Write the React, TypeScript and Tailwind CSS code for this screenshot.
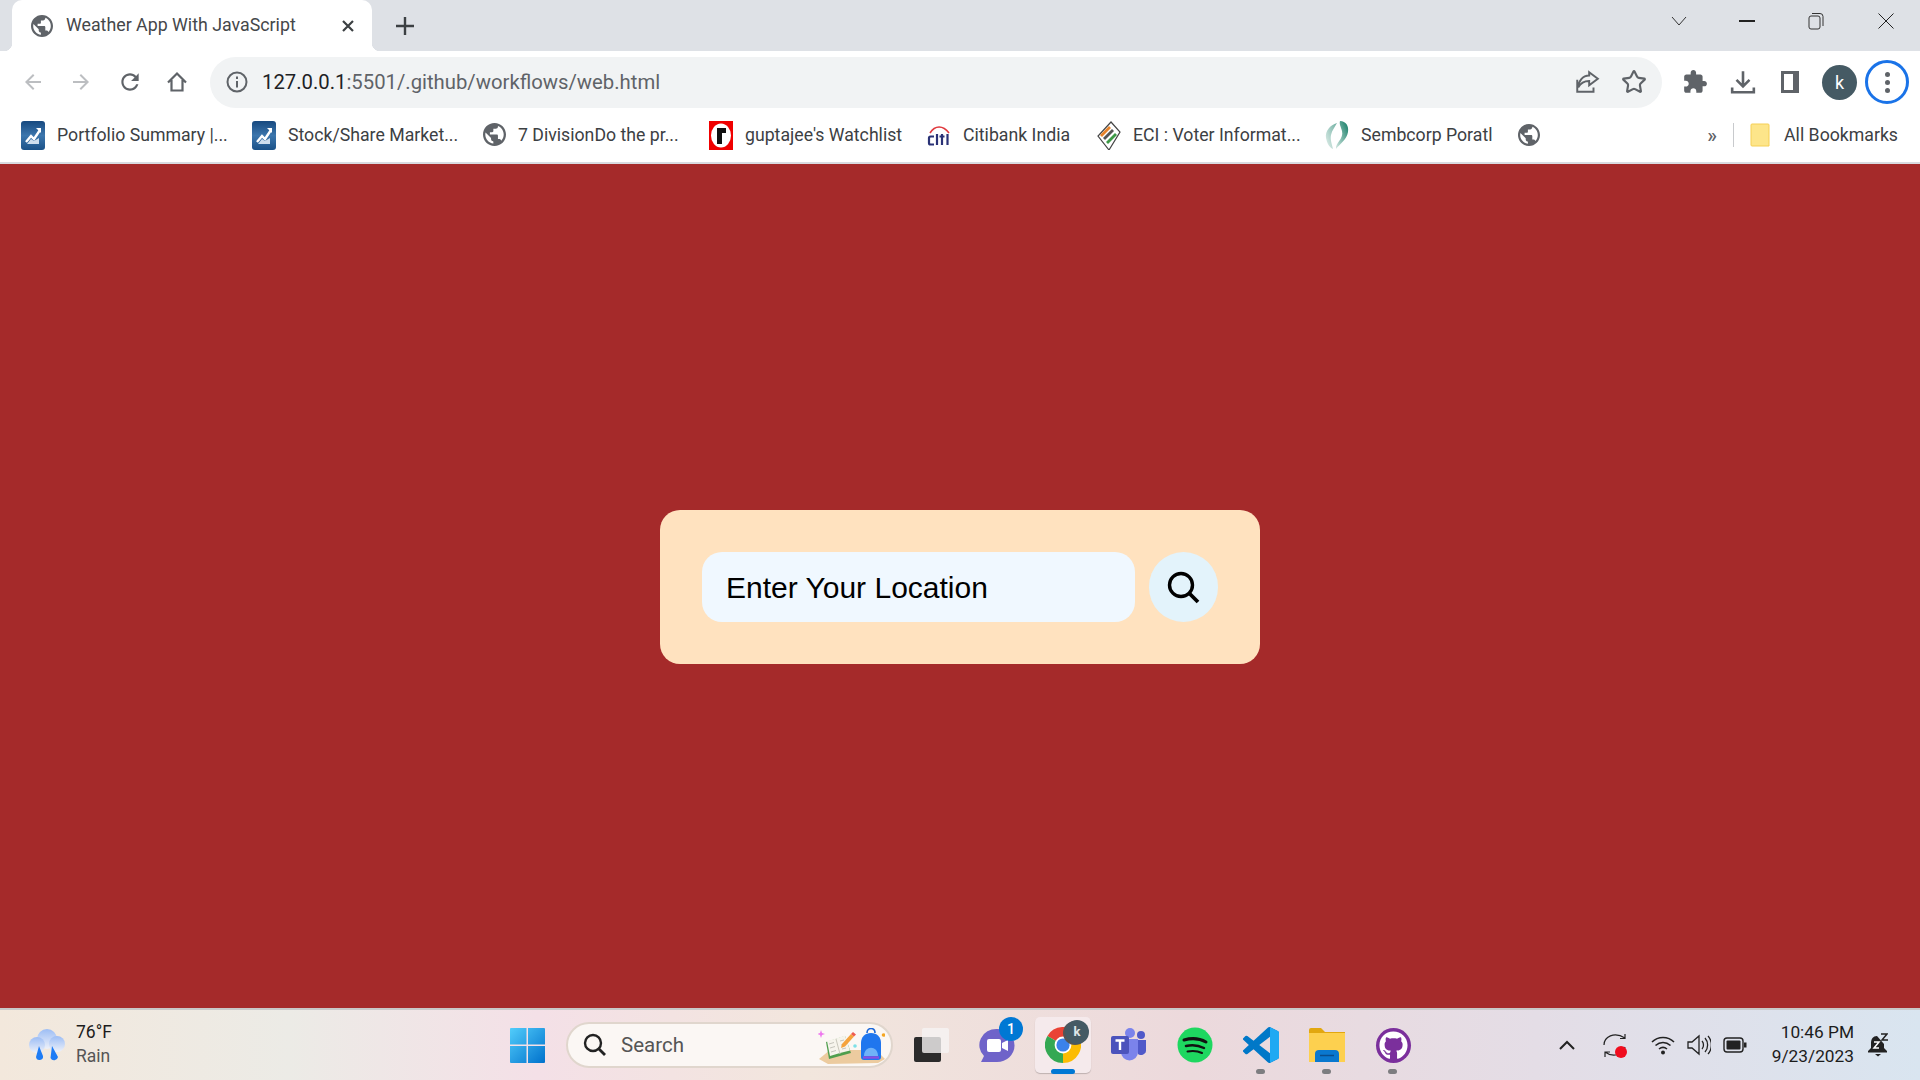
import React from 'react';
import { Star } from 'lucide-react';
import { FaGithub } from 'react-icons/fa';

const uiFont = "font-['Roboto','Noto_Sans',sans-serif]";

// Globe used for tab and bookmarks without a favicon
const Globe = ({ className = '' }: { className?: string }) => (
  <svg className={className} viewBox="2 2 20 20">
    <circle cx="12" cy="12" r="9" fill="#fff" />
    <path fill="#5f6368" d="M12 2C6.48 2 2 6.48 2 12s4.48 10 10 10 10-4.48 10-10S17.52 2 12 2zm-1 17.93c-3.95-.49-7-3.85-7-7.930 0-.62.08-1.210.21-1.790L9 15v1c0 1.100.9 2 2 2v1.930zm6.900-2.540c-.26-.81-1-1.390-1.900-1.390h-1v-3c0-.55-.45-1-1-1H8v-2h2c.55 0 1-.45 1-1V7h2c1.100 0 2-.9 2-2v-.41c2.930 1.190 5 4.060 5 7.410 0 2.080-.8 3.970-2.100 5.390z" />
  </svg>
);

const ChartFavicon = () => (
  <svg className="w-6 h-[29px] shrink-0" viewBox="0 0 24 29">
    <defs>
      <linearGradient id="cf" x1="0" y1="0" x2="0" y2="1">
        <stop offset="0" stopColor="#17497f" />
        <stop offset="0.5" stopColor="#3c76ad" />
        <stop offset="1" stopColor="#1b5288" />
      </linearGradient>
    </defs>
    <rect width="24" height="29" rx="3" fill="url(#cf)" />
    <path d="M5 21l5-6 3 3 6-9" stroke="#fff" strokeWidth="2.4" fill="none" />
    <path d="M6 23h12v-6l-5 3-3-2z" fill="#cfdfee" />
    <path d="M15 7h5v5z" fill="#fff" />
  </svg>
);

const RedFavicon = () => (
  <svg className="w-6 h-[29px] shrink-0" viewBox="0 0 24 29">
    <rect width="24" height="29" fill="#f00000" />
    <ellipse cx="12" cy="14.5" rx="10" ry="12" fill="#fff" />
    <path d="M8 7h9v5h-4v11H8z" fill="#111" />
  </svg>
);

const CitiFavicon = () => (
  <svg className="w-6 h-[29px] shrink-0" viewBox="0 0 24 29">
    <path d="M3 12C8 4 16 4 22 12" stroke="#e0393e" strokeWidth="1.6" fill="none" />
    <path d="M7 15.5H3.5c-1 0-1.5.6-1.5 1.5v5c0 1 .5 1.5 1.5 1.5H7M10 13v11M15 13v11M12.5 15.5h5M20.5 13v11" stroke="#2a3276" strokeWidth="2.2" fill="none" />
  </svg>
);

const EciFavicon = () => (
  <svg className="w-6 h-[29px] shrink-0" viewBox="0 0 24 29">
    <path d="M12 29L1 15 14 1l9 10z" fill="#fff" stroke="#444" strokeWidth="1.2" />
    <path d="M3 14l9-9 2 2-9 9z" fill="#e8832a" />
    <path d="M6 17l9-9 2 2-9 9z" fill="#555" />
    <path d="M9 21l9-9 2 2-9 9z" fill="#3d9a46" />
  </svg>
);

const SembFavicon = () => (
  <svg className="w-6 h-[29px] shrink-0" viewBox="0 0 24 29">
    <defs>
      <linearGradient id="sb" x1="1" y1="0" x2="0" y2="1">
        <stop offset="0" stopColor="#0f7a63" />
        <stop offset="1" stopColor="#d6e9e3" />
      </linearGradient>
    </defs>
    <path d="M15 0c6 0 9 5 8 11-1 7-8 12-12 17-1-6 8-10 6-18-1-4-3-7-2-10z" fill="url(#sb)" />
    <path d="M12 2C5 4 0 10 1 17c1 5 3 9 7 11-1-5-3-9-2-14 1-5 4-8 6-12z" fill="url(#sb)" opacity="0.6" />
  </svg>
);

const bookmarks = [
  { label: 'Portfolio Summary |...', icon: <ChartFavicon />, box: 'w-[170px]', gap: 'ml-[25px]' },
  { label: 'Stock/Share Market...', icon: <ChartFavicon />, box: 'w-[170px]', gap: 'ml-[25px]' },
  { label: '7 DivisionDo the pr...', icon: <Globe className="w-[23px] h-[23px] shrink-0" />, box: 'w-[167px]', gap: 'ml-[24px]' },
  { label: "guptajee's Watchlist", icon: <RedFavicon />, box: 'w-[157px]', gap: 'ml-[24px]' },
  { label: 'Citibank India', icon: <CitiFavicon />, box: 'w-[110px]', gap: 'ml-[25px]' },
  { label: 'ECI : Voter Informat...', icon: <EciFavicon />, box: 'w-[167px]', gap: 'ml-[24px]' },
  { label: 'Sembcorp Poratl', icon: <SembFavicon />, box: 'w-[132px]', gap: 'ml-[25px]' },
];

function TabStrip() {
  return (
    <div className="flex h-[51px] items-start bg-[#dee1e6] pl-3">
      <div className="relative flex h-[51px] w-[360px] items-center rounded-t-[10px] bg-white pl-[19px]">
        <div className="absolute -left-2 bottom-0 h-2 w-2 bg-[radial-gradient(circle_at_0_0,#dee1e6_8px,#fff_8.5px)]" />
        <div className="absolute -right-2 bottom-0 h-2 w-2 bg-[radial-gradient(circle_at_100%_0,#dee1e6_8px,#fff_8.5px)]" />
        <Globe className="h-[22px] w-[22px]" />
        <span className={`ml-[13px] w-[274px] text-[17.8px] text-[#45474a] ${uiFont}`}>Weather App With JavaScript</span>
        <svg className="ml-[1px] h-[14px] w-[14px]" viewBox="0 0 14 14">
          <path d="M2 2l10 10M12 2L2 12" stroke="#3c4043" strokeWidth="2.2" />
        </svg>
      </div>
      <svg className="ml-[24px] mt-[17px] h-[18px] w-[18px]" viewBox="0 0 18 18">
        <path d="M9 0v18M0 9h18" stroke="#3c4043" strokeWidth="2.4" />
      </svg>
      {/* window controls */}
      <div className="ml-auto mt-[12px] flex items-center">
        <svg className="h-[14px] w-[16px]" viewBox="0 0 16 14">
          <path d="M1 3l7 8 7-8" stroke="#333" strokeWidth="1" fill="none" />
        </svg>
        <div className="ml-[52px] h-[1.5px] w-4 bg-[#222]" />
        <svg className="ml-[53px] h-[18px] w-[16px]" viewBox="0 0 16 18">
          <rect x="1" y="4" width="11" height="13" rx="2" stroke="#333" fill="none" />
          <path d="M4 1.5h8a3 3 0 0 1 3 3V14" stroke="#333" fill="none" />
        </svg>
        <svg className="ml-[54px] mr-[26px] h-4 w-4" viewBox="0 0 16 16">
          <path d="M0.5 0.5l15 15M15.5 0.5l-15 15" stroke="#222" />
        </svg>
      </div>
    </div>
  );
}

function Toolbar() {
  return (
    <div className="flex h-[62px] items-center bg-white">
      <svg className="ml-[21px] h-6 w-6 fill-[#bcbec1]" viewBox="0 0 24 24">
        <path d="M20 11H7.83l5.59-5.59L12 4l-8 8 8 8 1.41-1.41L7.83 13H20v-2z" />
      </svg>
      <svg className="ml-6 h-6 w-6 fill-[#bcbec1]" viewBox="0 0 24 24">
        <path d="M12 4l-1.41 1.41L16.17 11H4v2h12.17l-5.58 5.59L12 20l8-8z" />
      </svg>
      <svg className="ml-6 h-[26px] w-[26px] fill-[#5f6368]" viewBox="0 0 24 24">
        <path d="M17.65 6.35C16.2 4.9 14.21 4 12 4c-4.42 0-7.99 3.58-7.99 8s3.57 8 7.99 8c3.73 0 6.84-2.55 7.73-6h-2.08c-.82 2.33-3.04 4-5.65 4-3.31 0-6-2.69-6-6s2.69-6 6-6c1.66 0 3.14.69 4.22 1.78L13 11h7V4l-2.35 2.35z" />
      </svg>
      <svg className="ml-[22px] h-6 w-6" viewBox="0 0 24 24">
        <path d="M3 12.5L12 3.5l9 9M6.5 10v10.5h11V10" stroke="#5f6368" strokeWidth="2.2" fill="none" />
      </svg>

      {/* address bar */}
      <div className="ml-[21px] flex h-[51px] w-[1452px] items-center rounded-full bg-[#f1f3f4]">
        <svg className="ml-[16px] h-[22px] w-[22px]" viewBox="0 0 22 22">
          <circle cx="11" cy="11" r="9.5" stroke="#5f6368" strokeWidth="2" fill="none" />
          <path d="M11 10v6.5M11 5.5v2.5" stroke="#5f6368" strokeWidth="2" />
        </svg>
        <span className={`ml-[14px] text-[20.3px] text-[#5f6368] ${uiFont}`}>
          <span className="text-[#202124]">127.0.0.1</span>:5501/.github/workflows/web.html
        </span>
        <svg className="ml-auto h-[26px] w-[26px]" viewBox="0 0 24 24">
          <path d="M3 10v11h15v-4M14 3l8 6-8 6v-4c-5 0-8 2-10 6 0-6 4-11 10-11z" stroke="#5f6368" strokeWidth="1.8" fill="none" />
        </svg>
        <Star className="ml-[21px] mr-[15px] h-[26px] w-[26px] text-[#5f6368]" strokeWidth={2} />
      </div>

      <svg className="ml-[20px] h-[26px] w-[26px] fill-[#5f6368]" viewBox="0 0 24 24">
        <path d="M20.5 11H19V7c0-1.1-.9-2-2-2h-4V3.5C13 2.12 11.88 1 10.5 1S8 2.12 8 3.5V5H4c-1.1 0-1.99.9-1.99 2v3.8H3.5c1.49 0 2.7 1.21 2.7 2.7s-1.21 2.7-2.7 2.7H2V20c0 1.1.9 2 2 2h3.8v-1.5c0-1.49 1.21-2.7 2.7-2.7 1.49 0 2.7 1.21 2.7 2.7V22H17c1.1 0 2-.9 2-2v-4h1.5c1.38 0 2.5-1.12 2.5-2.5S21.88 11 20.5 11z" />
      </svg>
      <svg className="ml-[22px] h-[26px] w-[26px]" viewBox="0 0 24 24">
        <path d="M12 2v13M6 10l6 6 6-6M2 17v4.5h20V17" stroke="#5f6368" strokeWidth="2.4" fill="none" />
      </svg>
      <svg className="ml-[23px] h-[26px] w-[22px]" viewBox="0 0 22 26">
        <path d="M2 2h18v22H2zM5 5v16h9V5z" fill="#5f6368" fillRule="evenodd" />
      </svg>
      <div className="ml-[21px] flex h-[35px] w-[35px] items-center justify-center rounded-full bg-[#455a64] text-[18px] text-white">
        <span className={uiFont}>k</span>
      </div>
      <div className="ml-[8px] flex h-[44px] w-[44px] flex-col items-center justify-center gap-[3px] rounded-full border-[3px] border-[#1a73e8]">
        <div className="h-[5px] w-[5px] rounded-full bg-[#5f6368]" />
        <div className="h-[5px] w-[5px] rounded-full bg-[#5f6368]" />
        <div className="h-[5px] w-[5px] rounded-full bg-[#5f6368]" />
      </div>
    </div>
  );
}

function BookmarksBar() {
  return (
    <div className={`flex h-[51px] items-center border-b-2 border-[#d8dadf] bg-white pb-[5px] pl-[21px] text-[17.7px] text-[#3c4043] ${uiFont}`}>
      {bookmarks.map((b, i) => (
        <div key={b.label} className={`flex items-center ${i > 0 ? b.gap : ''}`}>
          <div className="flex w-6 justify-center">{b.icon}</div>
          <span className={`ml-3 whitespace-nowrap ${b.box}`}>{b.label}</span>
        </div>
      ))}
      <Globe className="ml-[25px] h-[22px] w-[22px]" />
      <span className="ml-auto text-[20px] font-medium text-[#5f6368]">»</span>
      <div className="ml-[16px] h-[24px] w-px bg-[#c8cacd]" />
      <svg className="ml-[16px] h-[24px] w-[20px]" viewBox="0 0 20 24">
        <path d="M1 2a1 1 0 0 1 1-1h16a1 1 0 0 1 1 1v21H2a1 1 0 0 1-1-1z" fill="#fde58a" stroke="#f5cf55" />
      </svg>
      <span className="ml-[14px] mr-[22px]">All Bookmarks</span>
    </div>
  );
}

function SearchCard() {
  return (
    <main className="flex flex-1 items-center justify-center bg-[#a52a2a] pt-[2px]">
      <div className="flex h-[154px] w-[600px] items-center gap-[14px] rounded-[20px] bg-[#ffe2bf] p-[42px]">
        <div className="flex h-[70px] w-[433px] items-center rounded-[20px] bg-[#f0f8ff] pl-[24px] font-['Liberation_Sans',Arial,sans-serif] text-[30px] text-black">
          Enter Your Location
        </div>
        <button className="flex h-[70px] w-[69px] items-center justify-center rounded-full bg-[#e3f3fb]">
          <svg className="h-[33px] w-[33px]" viewBox="0 0 33 33">
            <circle cx="14" cy="14" r="11.5" stroke="#000" strokeWidth="3.4" fill="none" />
            <path d="M22.5 22.5L31 31" stroke="#000" strokeWidth="3.8" />
          </svg>
        </button>
      </div>
    </main>
  );
}

const WeatherIcon = () => (
  <svg className="h-[34px] w-[36px]" viewBox="0 0 36 34">
    <defs>
      <linearGradient id="cl" x1="0" y1="0" x2="0" y2="1">
        <stop offset="0" stopColor="#9cbdf5" />
        <stop offset="1" stopColor="#eef1f9" />
      </linearGradient>
    </defs>
    <circle cx="18" cy="11" r="10" fill="url(#cl)" />
    <circle cx="8" cy="17" r="8" fill="url(#cl)" />
    <circle cx="28" cy="16" r="8" fill="url(#cl)" />
    <path d="M10 18l4 10a3.5 3.5 0 0 1-7 1z" fill="#1e7cf5" />
    <path d="M23 18l6 11a4 4 0 0 1-7.5 1z" fill="#1e7cf5" />
  </svg>
);

const WindowsLogo = () => (
  <svg className="h-[35px] w-[35px] shrink-0" viewBox="0 0 35 35">
    <defs>
      <linearGradient id="wn" x1="0" y1="0" x2="1" y2="1">
        <stop offset="0" stopColor="#52cdfb" />
        <stop offset="1" stopColor="#0071cc" />
      </linearGradient>
    </defs>
    <path d="M1 0h15.5v16.5H0V1a1 1 0 0 1 1-1zM18 0h16a1 1 0 0 1 1 1v15.5H18zM0 18h16.5v17H1a1 1 0 0 1-1-1zM18 18h17v16a1 1 0 0 1-1 1H18z" fill="url(#wn)" />
  </svg>
);

// book, pencil and backpack sitting in the search pill
const SearchArt = () => (
  <svg className="h-[36px] w-[67px]" viewBox="0 0 67 36">
    <path d="M12 22h46l9 9-7 4-50 1-9-5z" fill="#eccb9f" />
    <path d="M8 14l19-6 6 17-22 6z" fill="#4f9e4d" />
    <path d="M9 13l9-2.500 9-3 5 15-10 2.500-10 3z" fill="#f6f4ec" />
    <path d="M18 11l4 15" stroke="#c9c7bb" strokeWidth="1" />
    <path d="M11 16l5-1.500M12 20l5-1.500M13 24l5-1.500M22 13l4-1M23 17l4-1M24 21l4-1" stroke="#b9b8ae" strokeWidth="0.800" />
    <path d="M24 16l9-10 3 2.500-9 10-4 1.500z" fill="#f5a33c" />
    <path d="M33 6l2-2 3 2.500-2 2z" fill="#ef5b50" />
    <path d="M49 5c0-6 8-6 8 0" stroke="#1a66d8" strokeWidth="1.600" fill="none" />
    <path d="M43 29V15c0-6 4-10 10-10s10 4 10 10v14a3 3 0 0 1-3 3H46a3 3 0 0 1-3-3z" fill="#1f76ee" />
    <path d="M46 28c0-11 14-11 14 0z" fill="#6fb2f8" />
    <path d="M45 29.500h16" stroke="#8a4fe0" strokeWidth="2.400" />
    <path d="M3 2l1 3 3 1-3 1-1 3-1-3-3-1 3-1z" fill="#ee77ee" />
    <circle cx="65.500" cy="7" r="1.800" fill="#f5a623" />
    <circle cx="37" cy="18" r="1.800" fill="#7de0e8" />
  </svg>
);

const ChromeIcon = () => (
  <svg className="h-[36px] w-[36px]" viewBox="0 0 36 36">
    <path d="M18 18L2.4 9A18 18 0 0 1 33.6 9Z" fill="#ea4335" />
    <path d="M18 18L33.6 9A18 18 0 0 1 18 36Z" fill="#fbbc04" />
    <path d="M18 18L18 36A18 18 0 0 1 2.4 9Z" fill="#34a853" />
    <circle cx="18" cy="18" r="8.4" fill="#fff" />
    <circle cx="18" cy="18" r="6.6" fill="#3b82ea" />
  </svg>
);

const TeamsIcon = () => (
  <svg className="h-[34px] w-[36px]" viewBox="0 0 36 34">
    <circle cx="19" cy="5" r="5" fill="#7b83eb" />
    <circle cx="30" cy="7" r="4" fill="#5059c9" />
    <path d="M24 12h11v11a5 5 0 0 1-8 3z" fill="#5059c9" />
    <path d="M10 11h17v13a8.500 8.500 0 0 1-17 0z" fill="#7b83eb" />
    <rect x="0" y="8" width="18" height="18" rx="2" fill="#4b53bc" />
    <path d="M4.500 12.500h9M9 12.500V22" stroke="#fff" strokeWidth="2.400" />
  </svg>
);

const SpotifyIcon = () => (
  <svg className="h-[36px] w-[36px]" viewBox="0 0 36 36">
    <circle cx="18" cy="18" r="17.500" fill="#1ed760" />
    <path d="M7 13c7-2 15-2 22 2" stroke="#111" strokeWidth="3" strokeLinecap="round" fill="none" />
    <path d="M9 19c6-1.500 12-1 18 2" stroke="#111" strokeWidth="2.500" strokeLinecap="round" fill="none" />
    <path d="M10.500 24.500c5-1 10-.7 14.500 1.500" stroke="#111" strokeWidth="2" strokeLinecap="round" fill="none" />
  </svg>
);

const VsCodeIcon = () => (
  <svg className="h-[36px] w-[36px]" viewBox="0 0 24 24">
    <path d="M23.15 2.587L18.21.21a1.494 1.494 0 0 0-1.705.29l-9.46 8.63-4.12-3.128a.999.999 0 0 0-1.276.057L.327 7.261A1 1 0 0 0 .326 8.74L3.899 12 .326 15.26a1 1 0 0 0 .001 1.479L1.65 17.94a.999.999 0 0 0 1.276.057l4.12-3.128 9.46 8.63a1.492 1.492 0 0 0 1.704.29l4.942-2.377A1.5 1.5 0 0 0 24 20.06V3.939a1.5 1.5 0 0 0-.85-1.352zm-5.146 14.861L10.826 12l7.178-5.448v10.896z" fill="#0078c8" />
    <path d="M18 .1l5.150 2.487A1.500 1.500 0 0 1 24 3.940v16.120a1.500 1.500 0 0 1-.850 1.352L18 23.900z" fill="#1fa9f3" />
  </svg>
);

const FolderIcon = () => (
  <svg className="h-[34px] w-[36px]" viewBox="0 0 36 34">
    <path d="M0 2a2 2 0 0 1 2-2h10l4 4h20v4H0z" fill="#e2a70f" />
    <path d="M0 5h36v29H0z" fill="#fdd04f" />
    <path d="M6 34V26a4 4 0 0 1 4-4h16a4 4 0 0 1 4 4v8z" fill="#0a78cf" />
    <path d="M11 27.500h14" stroke="#0a4d8c" strokeWidth="1.500" />
  </svg>
);

const ChatIcon = () => (
  <svg className="h-[36px] w-[36px]" viewBox="0 0 36 36">
    <path d="M18 2a17 16 0 0 1 0 33H2l3-6A17 16 0 0 1 18 2z" fill="#6f63c9" />
    <rect x="8" y="12" width="14" height="13" rx="2" fill="#fff" />
    <path d="M23 16l6-3v11l-6-3z" fill="#fff" />
  </svg>
);

const GrayDot = () => <div className="absolute bottom-[6px] left-[28px] h-[5px] w-[9px] rounded-full bg-[#7d7d80]" />;

function Taskbar() {
  return (
    <footer className={`flex h-[72px] items-center border-t-2 border-[#c9c8c8] bg-[linear-gradient(90deg,#f3e8dc_0%,#ecebe6_15%,#f4e0e7_28%,#f2e6dd_42%,#ecd9dc_62%,#e4dde6_80%,#d9e5f0_100%)] ${uiFont}`}>
      <div className="ml-[29px] flex w-[481px] items-center gap-[11px]">
        <WeatherIcon />
        <div className="-mt-[2px] text-[17.5px] leading-[24px]">
          <div className="text-[#1c1c1c]">76°F</div>
          <div className="text-[#555]">Rain</div>
        </div>
      </div>

      <WindowsLogo />
      <div className="ml-[21px] flex h-[46px] w-[327px] shrink-0 items-center rounded-full border-2 border-[#e0d6cd] bg-[#fbf7f4] pl-[15px]">
        <svg className="h-[24px] w-[24px]" viewBox="0 0 24 24">
          <circle cx="10" cy="10" r="8" stroke="#222" strokeWidth="2.400" fill="none" />
          <path d="M16 16l6 6" stroke="#222" strokeWidth="2.800" />
        </svg>
        <span className="ml-[14px] text-[20.5px] text-[#555]">Search</span>
        <div className="ml-auto mr-[6px] mt-[2px]">
          <SearchArt />
        </div>
      </div>

      <div className="ml-[5px] flex h-full shrink-0 items-center">
        {/* task view */}
        <div className="flex h-full w-[66px] items-center justify-center">
          <div className="relative h-[34px] w-[35px]">
            <div className="absolute bottom-0 left-0 h-[25px] w-[27px] rounded-[2px] bg-[#2b2b2b]" />
            <div className="absolute right-0 top-0 h-[25px] w-[27px] rounded-[2px] bg-[#f6f4f4]/80" />
          </div>
        </div>
        {/* chat */}
        <div className="relative flex h-full w-[66px] items-center justify-center">
          <ChatIcon />
          <div className="absolute left-[35px] top-[7px] flex h-[24px] w-[24px] items-center justify-center rounded-full bg-[#0078d4] text-[14px] font-medium text-white">1</div>
        </div>
        {/* chrome, active */}
        <div className="flex h-full w-[66px] items-center justify-center">
          <div className="relative flex h-[56px] w-[56px] items-center justify-center rounded-[5px] bg-[#f5eaec] shadow-[0_1px_1px_rgba(0,0,0,0.2)]">
            <ChromeIcon />
            <div className="absolute right-[2px] top-[3px] flex h-[24px] w-[24px] items-center justify-center rounded-full bg-[#455a64] text-[13px] font-bold text-[#dfe5e8] shadow-[-2px_1px_0_#555]">k</div>
            <div className="absolute bottom-[-1px] left-[16px] h-[5px] w-[24px] rounded-full bg-[#0078d4]" />
          </div>
        </div>
        <div className="flex h-full w-[66px] items-center justify-center"><TeamsIcon /></div>
        <div className="flex h-full w-[66px] items-center justify-center"><SpotifyIcon /></div>
        <div className="relative flex h-full w-[66px] items-center justify-center"><VsCodeIcon /><GrayDot /></div>
        <div className="relative flex h-full w-[66px] items-center justify-center"><FolderIcon /><GrayDot /></div>
        <div className="relative flex h-full w-[66px] items-center justify-center">
          <div className="flex h-[35px] w-[35px] items-center justify-center rounded-full bg-[#7b2f9c]">
            <FaGithub className="h-[29px] w-[29px] text-white" />
          </div>
          <GrayDot />
        </div>
      </div>

      {/* system tray */}
      <div className="flex flex-1 items-center">
        <svg className="ml-[133px] h-[10px] w-[16px]" viewBox="0 0 16 10">
          <path d="M1 9l7-7 7 7" stroke="#222" strokeWidth="2" fill="none" />
        </svg>
        <div className="relative ml-[28px] h-[26px] w-[24px]">
          <svg className="h-[26px] w-[24px]" viewBox="0 0 24 26">
            <path d="M1 13C1 5 11-1 22 6M22 2v4.500h-5M22 15c-2 8-12 11-20 5M2 25v-5h5" stroke="#222" strokeWidth="1.200" fill="none" />
          </svg>
          <div className="absolute bottom-0 right-0 h-3 w-3 rounded-full bg-[#f00d1e]" />
        </div>
        <svg className="ml-[24px] h-[20px] w-[24px]" viewBox="0 0 24 20">
          <path d="M1 7c6-6 16-6 22 0M4.500 10.500c4.500-4 10.500-4 15 0M8 14c2.500-2 5.500-2 8 0" stroke="#222" strokeWidth="1.600" fill="none" />
          <circle cx="12" cy="17.500" r="2" fill="#222" />
        </svg>
        <svg className="ml-[12px] h-[22px] w-[24px]" viewBox="0 0 24 22">
          <path d="M1 8h4l7-6v18l-7-6H1zM15 7c2 2 2 6 0 8M18 4c3.500 4 3.500 10 0 14M21 2c4.500 5 4.500 13 0 18" stroke="#222" strokeWidth="1.300" fill="none" />
        </svg>
        <svg className="ml-[12px] h-[16px] w-[24px]" viewBox="0 0 24 16">
          <rect x="1" y="1" width="19" height="14" rx="3" stroke="#222" strokeWidth="1.400" fill="none" />
          <rect x="3.500" y="3.500" width="14" height="9" rx="1" fill="#222" />
          <rect x="21" y="5.500" width="2.500" height="5" fill="#222" />
        </svg>
        <div className="-mt-[2px] ml-[10px] flex-1 text-right text-[17.3px] leading-[24px] text-[#1c1c1c]">
          <div>10:46 PM</div>
          <div>9/23/2023</div>
        </div>
        <svg className="ml-[14px] mr-[32px] h-[24px] w-[20px]" viewBox="0 0 20 24">
          <path d="M9 3c-4 0-6 3-6 7v5l-3 3v1.500h19V18l-3-3v-4" fill="#222" />
          <path d="M7 21h6l-3 2.500z" fill="#222" />
          <path d="M6 9h5l-5 6h5" stroke="#fff" strokeWidth="1.500" fill="none" />
          <path d="M13 1h6l-5 6h6" stroke="#222" strokeWidth="1.500" fill="none" />
        </svg>
      </div>
    </footer>
  );
}

export default function App() {
  return (
    <div className="flex h-screen w-full flex-col overflow-hidden">
      <TabStrip />
      <Toolbar />
      <BookmarksBar />
      <SearchCard />
      <Taskbar />
    </div>
  );
}
